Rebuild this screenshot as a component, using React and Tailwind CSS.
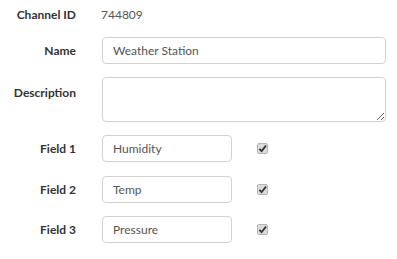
import { useState } from "react";

function Check() {
  return (
    <span className="ml-[25px] flex h-[11px] w-[11px] items-center justify-center rounded-[2px] border border-[#b5b5b5] bg-[#dcdcdc]">
      <svg width="9" height="9" viewBox="0 0 10 10">
        <path d="M1.5 5.5 L4 8 L8.8 1.8" fill="none" stroke="#333" strokeWidth="2" />
      </svg>
    </span>
  );
}

function Label({ children, top }) {
  return (
    <label
      className={`w-[76px] shrink-0 text-right text-[12px] font-bold leading-4 text-[#333] ${
        top ? "pt-[8px]" : ""
      }`}
    >
      {children}
    </label>
  );
}

const inputClass =
  "h-[27px] rounded-[4px] border border-[#d2d2d2] bg-white px-[10px] text-[12px] text-[#555] outline-none";

export default function App() {
  const [name, setName] = useState("Weather Station");
  const [fields, setFields] = useState(["Humidity", "Temp", "Pressure"]);

  return (
    <div className="h-[259px] w-[397px] bg-white font-['Lato',sans-serif]">
      <div className="flex items-center pt-[7px]">
        <Label>Channel ID</Label>
        <span className="ml-[25px] text-[12px] leading-4 text-[#555]">744809</span>
      </div>

      <div className="mt-[14px] flex items-center">
        <Label>Name</Label>
        <input
          className={`${inputClass} ml-[26px] w-[284px]`}
          value={name}
          onChange={(e) => setName(e.target.value)}
        />
      </div>

      <div className="mt-[13px] flex items-start">
        <Label top>Description</Label>
        <textarea className="ml-[26px] block h-[45px] w-[284px] rounded-[4px] border border-[#d2d2d2] bg-white px-[10px] py-[5px] text-[12px] text-[#555] outline-none" />
      </div>

      {fields.map((f, i) => (
        <div key={i} className={`${i === 1 ? "mt-[14px]" : "mt-[13px]"} flex items-center`}>
          <Label>Field {i + 1}</Label>
          <input
            className={`${inputClass} ml-[26px] w-[130px]`}
            value={f}
            onChange={(e) => {
              const next = [...fields];
              next[i] = e.target.value;
              setFields(next);
            }}
          />
          <Check />
        </div>
      ))}
    </div>
  );
}
